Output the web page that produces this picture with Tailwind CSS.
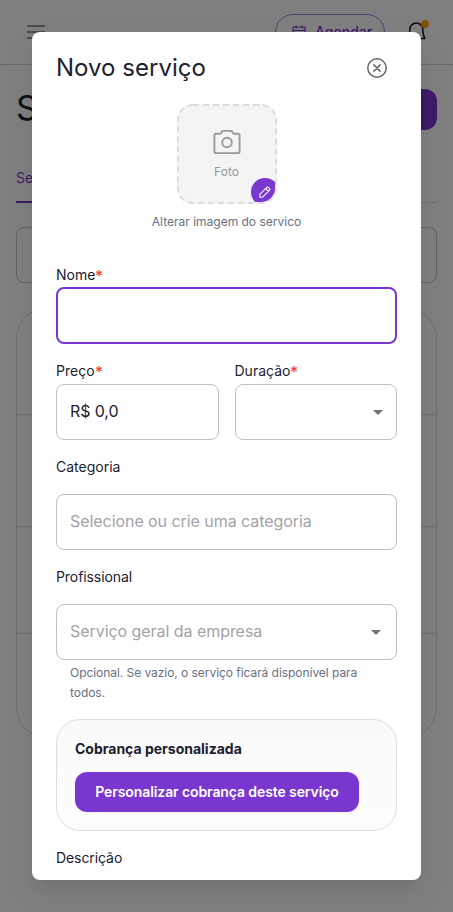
<!DOCTYPE html>
<html lang="pt-BR">
<head>
<meta charset="utf-8">
<meta name="viewport" content="width=device-width, initial-scale=1">
<title>Novo serviço</title>
<script src="https://cdn.jsdelivr.net/npm/@tailwindcss/browser@4"></script>
</head>
<body class="relative h-[912px] overflow-hidden bg-white font-['Inter',sans-serif] text-[#1c2130]">
  <div aria-hidden="true" class="h-full">
    <header class="flex h-[65px] items-center border-b border-[#d4d4d8] pl-6 pr-6">
      <svg class="mt-2 size-6 text-[#777]" viewBox="0 0 24 24" fill="none" stroke="currentColor" stroke-width="1.5"><path d="M3 2h18M3 8h18M3 14h18"/></svg>
      <div class="ml-auto flex h-9 w-[110px] items-center gap-2.5 rounded-[18px] border border-[#a67fe0] pl-4 text-sm font-medium text-[#7a37cf]">
        <svg class="size-3.5 shrink-0" viewBox="0 0 14 14" fill="none" stroke="currentColor" stroke-width="1.2"><path d="M1 2h12v11H1ZM4 .5v3M10 .5v3M1 5.5h12"/></svg>
        <span class="-ml-px">Agendar</span>
      </div>
      <div class="relative ml-5 size-6">
        <svg class="size-6" viewBox="0 0 24 24" fill="none" stroke="#111827" stroke-width="1.5" stroke-linejoin="round"><path d="M3 18.500c1.500-3 1.800-6 1.800-9a6.500 6.500 0 0 1 13 0c0 3 .1 6 2.200 9ZM9 21h5"/></svg>
        <span class="absolute top-0 right-0 size-2 rounded-full bg-[#ffa000]"></span>
      </div>
    </header>
    <main class="px-4 pt-6">
      <div class="flex h-[41px] items-center justify-between">
        <h1 class="mt-[-4px] text-[34px] leading-10 text-[#1c2130]">Serviços</h1>
        <div class="h-[41px] w-32 rounded-xl bg-[#7a37cf]"></div>
      </div>
      <div class="mt-[29px] flex h-[44px] items-start border-b border-[#dedede]">
        <div class="h-[44px] w-20 border-b-2 border-[#7a37cf] pt-[9px] text-sm text-[#7a37cf]">Serviços</div>
      </div>
      <div class="mt-6 flex h-[56px] items-center rounded-lg border border-[#c4c4c4] px-[14px] text-[#aaa]">Pesquisar</div>
      <div class="mt-6 h-[432px] rounded-[32px] border border-[#dcdcdc]">
        <div class="h-[107px] border-b border-[#dcdcdc]"></div>
        <div class="h-[112px] border-b border-[#dcdcdc]"></div>
        <div class="h-[107px] border-b border-[#dcdcdc]"></div>
      </div>
    </main>
  </div>

  <div class="absolute inset-0 bg-black/50 p-8">
    <section role="dialog" aria-label="Novo serviço" class="h-[848px] w-[389px] overflow-hidden rounded-lg bg-white px-6 shadow-[0_11px_15px_-7px_rgba(0,0,0,0.08),0_12px_28px_3px_rgba(0,0,0,0.05)]">
      <div class="flex h-[72px] items-center justify-between pr-[9px]">
        <h2 class="text-2xl leading-8 tracking-[0.03px]">Novo serviço</h2>
        <svg class="size-[22px]" viewBox="0 0 22 22" fill="none" stroke="#666" stroke-width="1.500" stroke-linecap="round"><circle cx="11" cy="11" r="9.200"/><path d="m7.900 7.900 6.200 6.200m0-6.200-6.200 6.200"/></svg>
      </div>

      <div class="flex flex-col items-center">
        <div class="relative flex h-[100px] w-[100px] flex-col items-center rounded-2xl bg-[#f4f4f4] pt-[22px] text-[#999]">
          <svg class="absolute inset-0 size-full" viewBox="0 0 100 100" fill="none" stroke="#dcdcdc" stroke-width="2"><rect x="1" y="1" width="98" height="98" rx="15" stroke-dasharray="6 4"/></svg>
          <svg class="h-8 w-8" viewBox="0 0 32 32" fill="none" stroke="currentColor" stroke-width="1.900" stroke-linejoin="round"><path d="M5.300 7.700h3.700c.5 0 .9-.2 1.100-.6l.8-1.500c.3-.5.7-.7 1.300-.7h7.600c.6 0 1 .2 1.300.7l.8 1.500c.2.400.6.6 1.100.6h3.700c1.100 0 1.900.7 1.900 1.800v15.700c0 1.100-.8 1.900-1.900 1.900H5.300c-1.100 0-1.900-.8-1.900-1.900V9.500c0-1.100.8-1.800 1.900-1.800Z"/><circle cx="16" cy="16.500" r="4.800"/></svg>
          <span class="mt-[5px] text-xs leading-[18px]">Foto</span>
          <span class="absolute inset-0.5 overflow-hidden rounded-[14px]">
            <span class="absolute left-[72px] top-[72px] flex size-7 items-center justify-center rounded-full bg-[#7a37cf]">
              <svg class="size-[14px]" viewBox="0 0 14 14" fill="none" stroke="#fff" stroke-width="1.100" stroke-linejoin="round"><path d="m1.800 9.400 7-7c.5-.5 1.100-.5 1.600 0l1.200 1.200c.5.5.5 1.100 0 1.600l-7 7H1.800V9.400ZM7.700 3.500l2.800 2.800"/></svg>
            </span>
          </span>
        </div>
        <p class="mt-2 text-xs leading-5 text-[#687083]">Alterar imagem do servico</p>
      </div>

      <label class="mt-[33px] block text-sm leading-5">Nome<span class="inline-block origin-left translate-y-px scale-110 font-medium text-[#f44336]">*</span></label>
      <div class="mt-[2px] h-[57px] rounded-lg border-2 border-[#7a37cf]"></div>

      <div class="mt-[17px] grid grid-cols-2 gap-4">
        <div>
          <label class="block text-sm leading-5">Preço<span class="inline-block origin-left translate-y-px scale-110 font-medium text-[#f44336]">*</span></label>
          <div class="mt-[3px] flex h-[56px] items-center rounded-lg border border-[#c0c0c0] px-[13px] pb-0.5 text-base tracking-[-0.1px]">R$ 0,0</div>
        </div>
        <div>
          <label class="block text-sm leading-5">Duração<span class="inline-block origin-left translate-y-px scale-110 font-medium text-[#f44336]">*</span></label>
          <div class="mt-[3px] flex h-[56px] items-center justify-end rounded-lg border border-[#c0c0c0] pr-[13px]">
            <svg class="h-[5px] w-[10px]" viewBox="0 0 10 5" fill="#707070"><path d="M0 0h10L5 5Z"/></svg>
          </div>
        </div>
      </div>

      <label class="mt-[17px] block text-sm leading-5">Categoria</label>
      <div class="mt-[17px] flex h-[56px] items-center rounded-lg border border-[#c0c0c0] px-[13px] pb-0.5 text-base tracking-[-0.06px] text-[#a3a3a7]">Selecione ou crie uma categoria</div>

      <label class="mt-[17px] block text-sm leading-5 tracking-[-0.08px]">Profissional</label>
      <div class="mt-[17px] flex h-[56px] items-center justify-between rounded-lg border border-[#c0c0c0] pl-[13px] pr-[15px] text-base tracking-[-0.05px] text-[#a3a3a7]">
        <span class="pb-0.5">Serviço geral da empresa</span>
        <svg class="h-[5px] w-[10px]" viewBox="0 0 10 5" fill="#707070"><path d="M0 0h10L5 5Z"/></svg>
      </div>
      <p class="mx-[14px] mt-[3px] text-xs leading-5 tracking-[-0.05px] text-[#687083]">Opcional. Se vazio, o serviço ficará disponível para todos.</p>

      <div class="mt-4 flex h-[112px] flex-col items-start rounded-[24px] border border-[#dfdfe1] bg-[linear-gradient(#fafafa,#fdfdfe)] pl-[18px] pt-[19px]">
        <h3 class="text-sm font-bold leading-5">Cobrança personalizada</h3>
        <button class="mt-[13px] flex h-10 w-[284px] items-center justify-center rounded-xl bg-[#7a37cf] text-sm font-semibold tracking-[-0.1px] text-white shadow-[0_1px_5px_rgba(0,0,0,0.05)]">Personalizar cobrança deste serviço</button>
      </div>
      <label class="mt-[17px] block text-sm leading-5 tracking-[-0.08px]">Descrição</label>
    </section>
  </div>
</body>
</html>
